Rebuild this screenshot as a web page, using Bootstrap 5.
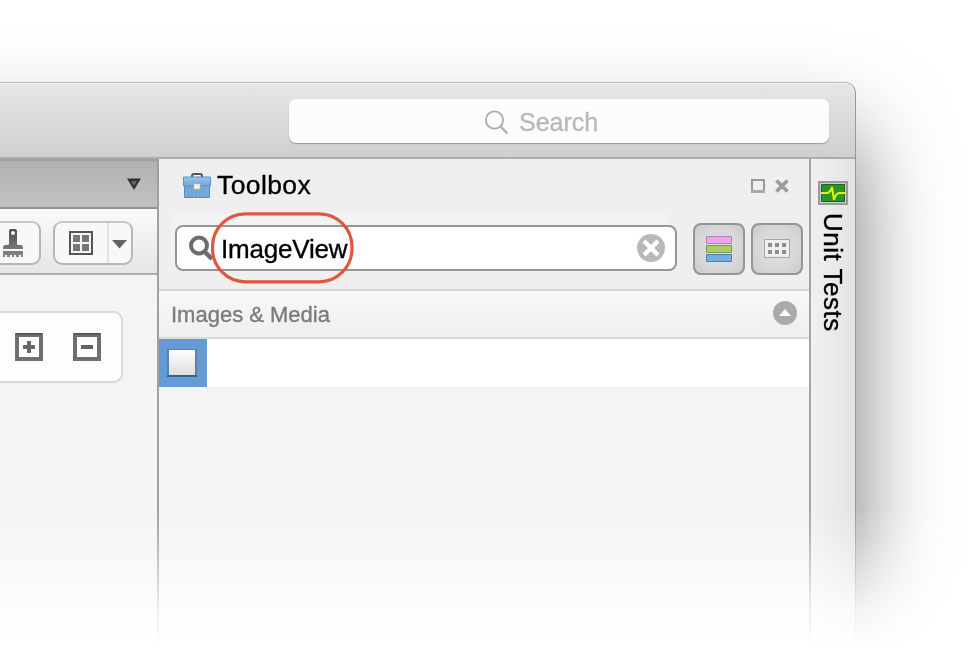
<!DOCTYPE html>
<html lang="en">
<head>
<meta charset="utf-8">
<meta name="viewport" content="width=device-width, initial-scale=1">
<title>Toolbox</title>
<link href="https://cdn.jsdelivr.net/npm/bootstrap@5.3.0/dist/css/bootstrap.min.css" rel="stylesheet">
<style>
body{font-family:"Liberation Sans",Arial,sans-serif;background:#fff;color:#000;height:653px;overflow:hidden}
svg{display:block;flex:none}
span{-webkit-text-stroke:.35px currentColor}
.stage{height:653px;padding-top:82px;-webkit-mask-image:linear-gradient(#000 508px,rgba(0,0,0,.82) 535px,rgba(0,0,0,.5) 572px,rgba(0,0,0,.18) 610px,transparent 648px);mask-image:linear-gradient(#000 508px,rgba(0,0,0,.82) 535px,rgba(0,0,0,.5) 572px,rgba(0,0,0,.18) 610px,transparent 648px)}
.app-window{width:1056px;height:760px;margin-left:-200px;padding-left:200px;border:solid #b5b5b5;border-width:1px 1px 0 0;border-right-color:#999;border-radius:0 11px 0 0;background:linear-gradient(#e8e6e8,#cfcfcf 76px,#f4f4f4 76px);box-shadow:0 54px 90px rgba(0,0,0,.52)}
.titlebar{height:76px;padding:16px 26px 0 0;border-bottom:2px solid #adadad;box-shadow:inset 0 1px #f5f5f5;border-radius:0 10px 0 0}
.global-search{width:540px;height:44px;border-radius:7px;background:#fcfcfc;box-shadow:0 1px 1px #999;font-size:25px;line-height:44px;color:#b9b9bb;padding-left:196px;padding-top:2px}
.global-search span{margin-left:10px}
.left-pane{width:159px;border-right:2px solid #9da1a4;background:#f4f4f4}
.tabstrip{height:50px;background:linear-gradient(#b1b1b1,#c2c2c2);border-top:2px solid #a0a0a0;border-bottom:2px solid #929292;padding-right:16px}
.toolstrip{height:66px;padding-top:4px;background:linear-gradient(#fafafa,#e6e6e6);border-bottom:2px solid #adadad}
.tool{height:44px;border:2px solid #b6b6b6;border-top-color:#c8c8c8;border-radius:9px;background:#f8f8f8}
.brush-tool{width:41px;border-left:0;border-radius:0 9px 9px 0}
.grid-tool{width:80px;margin-left:12px}
.grid-tool .grid-face{width:54px;border-right:2px solid #e2e2e2}
.zoom-group{width:123px;height:72px;margin-top:36px;border:2px solid #d9d9d9;border-left:0;border-radius:0 9px 9px 0;background:#fdfdfd;padding-left:15px;gap:30px}
.toolbox{width:652px;border-right:2px solid #a5a5a5;background:#f4f4f4}
.toolbox-head{height:132px;background:#efefef;border-bottom:2px solid #d8d8d8}
.toolbox-title{height:54px;font-size:26.5px;line-height:52px;padding:0 20px 0 24px}
.toolbox-title span{margin:-2px 0 0 6px;letter-spacing:.4px}
.pane-controls{gap:10px}
.field-row{padding-left:12px;height:76px;background:linear-gradient(#f3f3f3,#f3f3f3) 12px 1px/498px 48px no-repeat}
.filter{width:502px;height:46px;margin:12px 0 0 4px;border:2px solid #969696;border-radius:8px;background:#fff;font-size:26px;padding:0 10px 0 11px}
.filter .query{margin-left:5px;letter-spacing:-.2px;line-height:42px;padding-top:1px}
.clear-icon{margin-top:-1px}
.view-btn{width:52px;height:52px;margin-top:10px;border:2px solid #959595;border-radius:8px;background:radial-gradient(#e2e2e2,#d6d6d6 65%,#c9c9c9)}
.view-btn svg{margin-top:-1px}
.second-view{margin-left:6px}
.callout{position:absolute;left:210px;top:211px;width:145px;height:73px}
.section-head{height:48px;background:linear-gradient(#f8f8f8,#efefef);border-bottom:2px solid #dadada;color:#7b7b7b;font-size:22px;padding:0 12px}
.section-head svg{margin-top:-2px}
.item-row{height:48px;background:#fff}
.selected-item{width:48px;height:48px;background:#649bd5;padding:0 2px 1px 0}
.side-tab{width:44px;background:linear-gradient(90deg,#f1f1f1,#e3e3e3);padding-top:22px}
.side-tab span{writing-mode:vertical-rl;font-size:26px;line-height:30px;letter-spacing:.5px;margin-top:8px}
</style>
</head>
<body>
<main class="stage position-relative overflow-hidden">
<div class="app-window">
  <header class="titlebar d-flex justify-content-end">
    <div class="global-search d-flex align-items-center">
      <svg width="24" height="25" viewBox="0 0 24 25" fill="none" stroke="#aaa" stroke-width="1.8"><circle cx="9.500" cy="10" r="8.600"/><path d="M15.500 16.500l7 7" stroke-width="2.2"/></svg>
      <span>Search</span>
    </div>
  </header>
  <div class="d-flex h-100">
    <aside class="left-pane flex-shrink-0">
      <div class="tabstrip d-flex align-items-center justify-content-end">
        <svg width="14" height="12" viewBox="0 0 14 12"><path d="M0 0.500h14L7 12z" fill="#303030"/><path d="M4 3h6L7 8z" fill="#666"/></svg>
      </div>
      <div class="toolstrip d-flex align-items-center">
        <div class="tool brush-tool d-flex align-items-center">
          <svg width="24" height="30" viewBox="0 0 24 30"><defs><linearGradient id="dark" gradientUnits="userSpaceOnUse" x1="0" y1="0" x2="0" y2="28"><stop stop-color="#4d4d4d"/><stop offset="1" stop-color="#858585"/></linearGradient></defs><path fill="url(#dark)" fill-rule="evenodd" d="M9 3q0-2 2-2h4q2 0 2 2v13q0 1 2 1h2q2 0 2 4H3q0-4 2-4h2q2 0 2-1zM13 3a2 2 0 100 4 2 2 0 000-4zM3 23h20v6h-2v-2h-2v2h-3v-2h-2v2h-2v-2h-2v2H7v-2H5v2H3z"/></svg>
        </div>
        <div class="tool grid-tool d-flex">
          <div class="grid-face d-flex align-items-center justify-content-center">
            <svg width="24" height="24"><path d="M1 1h22v22H1z" fill="none" stroke="#555" stroke-width="2"/><path d="M4 4h7v7H4zm9 0h7v7h-7zM4 13h7v7H4zm9 0h7v7h-7z" fill="#777"/></svg>
          </div>
          <div class="d-flex flex-fill align-items-center justify-content-center pt-1"><svg width="16" height="11"><path d="M0 0h15L7.500 8.500z" fill="#636363"/></svg></div>
        </div>
      </div>
      <div class="zoom-group d-flex align-items-center">
        <svg width="28" height="28"><path d="M2 2h24v24H2z" fill="#fff" stroke="#6f6f6f" stroke-width="4"/><path d="M1 .5h26" stroke="#505050" stroke-width="2"/><path d="M14 8v12M8 14h12" stroke="#686868" stroke-width="4"/></svg>
        <svg width="28" height="28"><path d="M2 2h24v24H2z" fill="#fff" stroke="#6f6f6f" stroke-width="4"/><path d="M1 .5h26" stroke="#505050" stroke-width="2"/><path d="M8 14h12" stroke="#626262" stroke-width="4"/></svg>
      </div>
    </aside>

    <section class="toolbox flex-shrink-0">
      <div class="toolbox-head">
        <div class="toolbox-title d-flex align-items-center">
          <svg width="28" height="26" viewBox="0 0 28 26"><defs><linearGradient id="case" x2="0" y2="1"><stop stop-color="#9ac5ee"/><stop offset="1" stop-color="#72a5d6"/></linearGradient></defs><path d="M9 6V3q0-2 2-2h6q2 0 2 2v3" fill="none" stroke="#555" stroke-width="2"/><path d="M1.500 12h25v12.500h-25z" fill="#78a9d8" stroke="#5b8cba"/><path d="M5 14v10M9 14v10M13 18v6M17 14v10M21 14v10" stroke="#6d9fcf"/><path d="M.5 4h27v9H.5z" fill="url(#case)" stroke="#5c91c3"/><path d="M11 11h6v5h-6z" fill="#f8f3d9" stroke="#c5c2ac" stroke-width=".6"/></svg>
          <span>Toolbox</span>
          <div class="pane-controls d-flex ms-auto">
            <svg width="14" height="14"><path d="M1 1h12v11H1z" fill="none" stroke="#999" stroke-width="2"/><path d="M0 11h14v3H0z" fill="#aaa"/></svg>
            <svg width="14" height="14"><path d="M1.500 1.500l11 11M12.500 1.500l-11 11" stroke="#9c9c9c" stroke-width="3.800"/></svg>
          </div>
        </div>
        <div class="field-row d-flex align-items-start">
          <div class="filter d-flex align-items-center">
            <svg width="28" height="26" viewBox="0 0 28 26" fill="none" stroke="#6c6c6c"><circle cx="11" cy="10.500" r="8" stroke-width="4"/><path d="M16 16l8 8" stroke-width="4.500"/></svg>
            <span class="query">ImageView</span>
            <svg class="clear-icon ms-auto" width="28" height="28"><circle cx="14" cy="14" r="14" fill="#b9b9b9"/><path d="M7 7l14 14M21 7L7 21" stroke="#fff" stroke-width="4.500"/></svg>
          </div>
          <div class="view-btn ms-3 d-flex align-items-center justify-content-center">
            <svg width="26" height="26"><path d="M.5.5h25v7H.5z" fill="#eda6ed" stroke="#b284b3"/><path d="M.5 9.500h25v7H.5z" fill="#a5cf68" stroke="#7b9c4c"/><path d="M.5 18.500h25v7H.5z" fill="#72ade6" stroke="#5080b2"/></svg>
          </div>
          <div class="view-btn second-view d-flex align-items-center justify-content-center">
            <svg width="26" height="19"><path d="M.5.5h25v18H.5z" fill="#eee" stroke="#a5a5a5"/><path d="M4 4h4v4H4zm7 0h4v4h-4zm7 0h4v4h-4zM4 11h4v4H4zm7 0h4v4h-4zm7 0h4v4h-4z" fill="#8e8e8e"/></svg>
          </div>
        </div>
      </div>
      <div class="section-head d-flex align-items-center justify-content-between">
        <span>Images &amp; Media</span>
        <svg width="24" height="24"><circle cx="12" cy="12" r="12" fill="#ababab"/><path d="M6 15l6-7 6 7z" fill="#fff"/></svg>
      </div>
      <div class="item-row"><div class="selected-item d-flex align-items-center justify-content-center">
        <svg width="32" height="32"><defs><linearGradient id="tile" x2="0" y2="1"><stop stop-color="#fff"/><stop offset="1" stop-color="#dedede"/></linearGradient></defs><path d="M1 2h30v28H1z" fill="#5484b5"/><path d="M1 28h30v2H1z" fill="#41627f"/><path d="M3 3h26v25H3z" fill="url(#tile)"/></svg>
      </div></div>
    </section>

    <aside class="side-tab d-flex flex-column align-items-center flex-shrink-0">
      <svg width="30" height="24"><path d="M1 1h28v22H1z" fill="#ccc" stroke="#999" stroke-width="2"/><path d="M3.500 3.500h23v17h-23z" fill="#2c912a" stroke="#17691d"/><path d="M3 12h6q4-1 5-6l2 13q2-7 5-7h6" fill="none" stroke="#dcff00" stroke-width="2"/></svg>
      <span>Unit Tests</span>
    </aside>
  </div>
</div>
<svg class="callout" viewBox="0 0 145 73"><rect x="2.500" y="2.800" width="139.500" height="68" rx="33" fill="none" stroke="#e1563c" stroke-width="3.200"/></svg>
</main>
<script src="https://cdn.jsdelivr.net/npm/bootstrap@5.3.0/dist/js/bootstrap.bundle.min.js"></script>
</body>
</html>
